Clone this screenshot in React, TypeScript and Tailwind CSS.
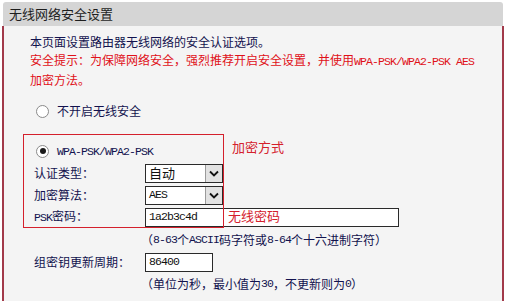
const cjk = "font-['Noto_Sans_CJK_SC','Liberation_Sans',sans-serif]"

function Mono({ children }: { children: React.ReactNode }) {
  return (
    <span className="font-['Liberation_Mono',monospace] text-[11.5px] tracking-[-0.9px]">
      {children}
    </span>
  )
}

function Radio({ checked }: { checked?: boolean }) {
  return (
    <span className="w-[13px] h-[13px] rounded-full border border-[#8a8a8a] bg-white flex items-center justify-center shrink-0">
      {checked && <span className="w-[6px] h-[6px] rounded-full bg-[#1a1a1a]" />}
    </span>
  )
}

function Select({ value, mono }: { value: string; mono?: boolean }) {
  return (
    <div className="w-[78px] h-[19px] border border-[#2a2a2a] bg-white flex items-stretch">
      <span className={`flex-1 pl-[3px] flex items-center text-[#111] ${mono ? '' : 'text-[13px]'}`}>
        {mono ? <Mono>{value}</Mono> : value}
      </span>
      <span className="w-[17px] bg-[#e2e2e2] border-l border-[#9a9a9a] flex items-center justify-center">
        <svg width="10" height="7" viewBox="0 0 10 7">
          <path d="M1 1.5 L5 5.5 L9 1.5" fill="none" stroke="#111" strokeWidth="1.8" />
        </svg>
      </span>
    </div>
  )
}

function Input({ value, w }: { value: string; w: string }) {
  return (
    <div className={`${w} h-[19px] border border-[#2a2a2a] bg-white flex items-center pl-[3px] text-[#111]`}>
      <Mono>{value}</Mono>
    </div>
  )
}

export default function App() {
  return (
    <div className={`w-[507px] h-[301px] bg-white overflow-hidden ${cjk} text-[12px]`}>
      <div className="ml-[2px] w-[502px] pt-[2px]">
        {/* header */}
        <div className="h-[24px] mx-px bg-[#d5d5d5] rounded-t-[3px] flex items-center pl-[6px] text-[13px] text-[#1e1e1e]">
          无线网络安全设置
        </div>

        {/* body */}
        <div className="relative h-[275px] bg-[#f4f4f4] border-x-2 border-[#a23a4a] pt-[7px] text-[#12124e]">
          <div className="pl-[26px] leading-[18px]">
            <div>本页面设置路由器无线网络的安全认证选项。</div>
            <div className="text-[#e01018]">
              安全提示：为保障网络安全，强烈推荐开启安全设置，并使用<Mono>WPA-PSK/WPA2-PSK AES</Mono>
            </div>
            <div className="text-[#e01018]">加密方法。</div>
          </div>

          <div className="pl-[30px]">
            <div className="h-[22px] mt-[11px] pl-[2px] flex items-center gap-[8px]">
              <Radio />
              <span>不开启无线安全</span>
            </div>

            <div className="h-[22px] mt-[18px] pl-[2px] flex items-center gap-[8px]">
              <Radio checked />
              <span><Mono>WPA-PSK/WPA2-PSK</Mono></span>
            </div>

            <div className="h-[22px] flex items-center">
              <span className="w-[111px]">认证类型：</span>
              <Select value="自动" />
            </div>
            <div className="h-[22px] flex items-center">
              <span className="w-[111px]">加密算法：</span>
              <Select value="AES" mono />
            </div>
            <div className="h-[22px] flex items-center">
              <span className="w-[111px]"><Mono>PSK</Mono>密码：</span>
              <Input value="1a2b3c4d" w="w-[254px]" />
            </div>
            <div className="h-[23px] flex items-center pl-[107px]">
              （<Mono>8-63</Mono>个<Mono>ASCII</Mono>码字符或<Mono>8-64</Mono>个十六进制字符）
            </div>
            <div className="h-[22px] flex items-center">
              <span className="w-[111px]">组密钥更新周期：</span>
              <Input value="86400" w="w-[68px]" />
            </div>
            <div className="h-[22px] flex items-center pl-[107px]">
              （单位为秒，最小值为<Mono>30</Mono>，不更新则为<Mono>0</Mono>）
            </div>
          </div>

          {/* annotations */}
          <div className="absolute left-[19px] top-[108px] w-[201px] h-[94px] border border-[#d4202c] pointer-events-none" />
          <span className="absolute left-[228px] top-[111px] text-[13px] text-[#d4202c]">加密方式</span>
          <span className="absolute left-[224px] top-[180px] text-[13px] text-[#d4202c]">无线密码</span>
        </div>
      </div>
    </div>
  )
}
